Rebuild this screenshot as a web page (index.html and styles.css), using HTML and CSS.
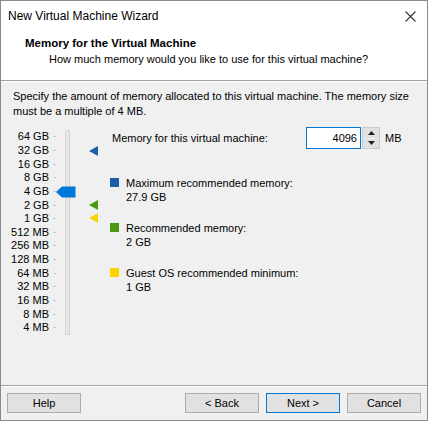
FILE: index.html
```html
<!DOCTYPE html>
<html lang="en">
<head>
    <meta charset="UTF-8">
    <meta name="viewport" content="width=device-width, initial-scale=1.0">
    <title>New Virtual Machine Wizard</title>
    <link rel="stylesheet" href="styles.css">
</head>
<body>
    <div class="wizard">
        <div class="titlebar">
            <span class="title">New Virtual Machine Wizard</span>
            <svg class="close" width="11" height="11" viewBox="0 0 11 11">
                <path d="M0.5 0.5 L10.5 10.5 M10.5 0.5 L0.5 10.5" stroke="#333" stroke-width="1.1" fill="none"/>
            </svg>
        </div>
        <div class="header">
            <div class="heading">Memory for the Virtual Machine</div>
            <div class="subheading">How much memory would you like to use for this virtual machine?</div>
        </div>
        <div class="content">
            <p class="intro">Specify the amount of memory allocated to this virtual machine. The memory size must be a multiple of 4 MB.</p>
            <div class="main">
                <div class="scale">
                    <div class="labels" id="labels"></div>
                    <div class="slider">
                        <div class="track"></div>
                        <svg class="thumb" width="20" height="12" viewBox="0 0 20 12">
                            <path d="M0 6 L6 0.5 H19.5 V11.5 H6 Z" fill="#0078d7"/>
                        </svg>
                        <svg class="marker" style="top: 16px" width="9" height="10" viewBox="0 0 9 10">
                            <path d="M0 5 L9 0 V10 Z" fill="#1b5fa8"/>
                        </svg>
                        <svg class="marker" style="top: 70px" width="9" height="10" viewBox="0 0 9 10">
                            <path d="M0 5 L9 0 V10 Z" fill="#4d9a12"/>
                        </svg>
                        <svg class="marker" style="top: 83px" width="9" height="10" viewBox="0 0 9 10">
                            <path d="M0 5 L9 0 V10 Z" fill="#fad400"/>
                        </svg>
                    </div>
                </div>
                <div class="details">
                    <div class="amount">
                        <label for="mem">Memory for this virtual machine:</label>
                        <div class="spin">
                            <input id="mem" type="text" value="4096">
                            <div class="spin-btns">
                                <button class="spin-btn"><svg width="7" height="4" viewBox="0 0 7 4"><path d="M0 4 L3.5 0 L7 4 Z" fill="#222"/></svg></button>
                                <button class="spin-btn"><svg width="7" height="4" viewBox="0 0 7 4"><path d="M0 0 L3.5 4 L7 0 Z" fill="#222"/></svg></button>
                            </div>
                        </div>
                        <span class="unit">MB</span>
                    </div>
                    <div class="legend">
                        <div class="item">
                            <span class="swatch blue"></span>
                            <div>Maximum recommended memory:<br>27.9 GB</div>
                        </div>
                        <div class="item">
                            <span class="swatch green"></span>
                            <div>Recommended memory:<br>2 GB</div>
                        </div>
                        <div class="item">
                            <span class="swatch yellow"></span>
                            <div>Guest OS recommended minimum:<br>1 GB</div>
                        </div>
                    </div>
                </div>
            </div>
        </div>
        <div class="footer">
            <button class="btn">Help</button>
            <div class="nav">
                <button class="btn">&lt; Back</button>
                <button class="btn default">Next &gt;</button>
                <button class="btn">Cancel</button>
            </div>
        </div>
    </div>

    <script>
        const sizes = ["64 GB", "32 GB", "16 GB", "8 GB", "4 GB", "2 GB", "1 GB", "512 MB",
            "256 MB", "128 MB", "64 MB", "32 MB", "16 MB", "8 MB", "4 MB"];
        const labels = document.getElementById("labels");
        sizes.forEach(size => {
            labels.innerHTML += `<div class="row"><span class="size">${size}</span><i class="tick"></i></div>`;
        });
    </script>
</body>
</html>
```

FILE: styles.css
```css
* {
    box-sizing: border-box;
}
body {
    margin: 0;
    font-family: "Liberation Sans", Arial, sans-serif;
    font-size: 11px;
    color: #000;
}
.wizard {
    width: 428px;
    height: 421px;
    border: 1px solid #8a8a8a;
    background: #f0f0f0;
    display: flex;
    flex-direction: column;
}
.titlebar {
    height: 30px;
    flex: none;
    background: #fff;
    display: flex;
    align-items: center;
    justify-content: space-between;
    padding: 0 11px 0 7px;
    font-size: 12px;
}
.close {
    margin-top: 1px;
}
.header {
    height: 50px;
    flex: none;
    background: #fff;
    border-bottom: 1px solid #a0a0a0;
    padding-left: 24px;
}
.heading {
    font-weight: bold;
    font-size: 11.5px;
    line-height: 16px;
    padding-top: 4px;
}
.subheading {
    padding-left: 24px;
    line-height: 16px;
}
.content {
    flex: 1;
    border-top: 1px solid #fff;
    border-bottom: 1px solid #a0a0a0;
    padding: 7px 12px 0 12px;
}
.intro {
    margin: 0;
    line-height: 15px;
}
.main {
    display: flex;
    margin-top: 11px;
}
.scale {
    display: flex;
}
.labels {
    width: 44px;
    margin-left: -4px;
    margin-right: 4px;
}
.row {
    height: 13.65px;
    display: flex;
    align-items: center;
    line-height: 13px;
    white-space: nowrap;
}
.size {
    flex: none;
    width: 40px;
    text-align: right;
}
.tick {
    flex: none;
    width: 3px;
    height: 1px;
    background: #c8c8c8;
    margin-left: 4px;
}
.slider {
    position: relative;
    width: 55px;
    height: 205px;
}
.track {
    position: absolute;
    left: 8px;
    top: 0;
    bottom: 0;
    width: 5px;
    background: #e7e7e7;
    border: 1px solid #d6d6d6;
}
.thumb {
    position: absolute;
    left: -1px;
    top: 56px;
}
.marker {
    position: absolute;
    left: 32px;
}
.details {
    flex: 1;
}
.amount {
    display: flex;
    align-items: center;
    margin-top: -3px;
}
.amount label {
    width: 194px;
}
.spin {
    display: flex;
}
.spin input {
    width: 55px;
    height: 22px;
    border: 1px solid #0078d7;
    font-family: inherit;
    font-size: 11px;
    text-align: right;
    padding: 1px 3px;
    outline: none;
}
.spin-btns {
    display: flex;
    flex-direction: column;
    width: 18px;
    height: 22px;
    margin-left: 1px;
    border: 1px solid #ccc;
}
.spin-btn {
    flex: 1;
    border: none;
    background: #e1e1e1;
    padding: 0;
    display: flex;
    align-items: center;
    justify-content: center;
}
.spin-btn + .spin-btn {
    border-top: 1px solid #f0f0f0;
}
.unit {
    margin-left: 5px;
}
.legend {
    margin-top: 27px;
}
.item {
    display: flex;
    line-height: 14px;
    margin-bottom: 17px;
}
.swatch {
    width: 9px;
    height: 9px;
    margin: 2px 7px 0 -2px;
}
.blue { background: #1b5fa8; }
.green { background: #4d9a12; }
.yellow { background: #fad400; }
.footer {
    height: 34px;
    flex: none;
    border-top: 1px solid #fff;
    display: flex;
    justify-content: space-between;
    padding: 6px 6px 0 6px;
}
.nav {
    display: flex;
    gap: 7px;
}
.btn {
    width: 74px;
    height: 20px;
    background: #e1e1e1;
    border: 1px solid #adadad;
    font-family: inherit;
    font-size: 11px;
    padding: 0;
}
.default {
    border-color: #0078d7;
}
```
